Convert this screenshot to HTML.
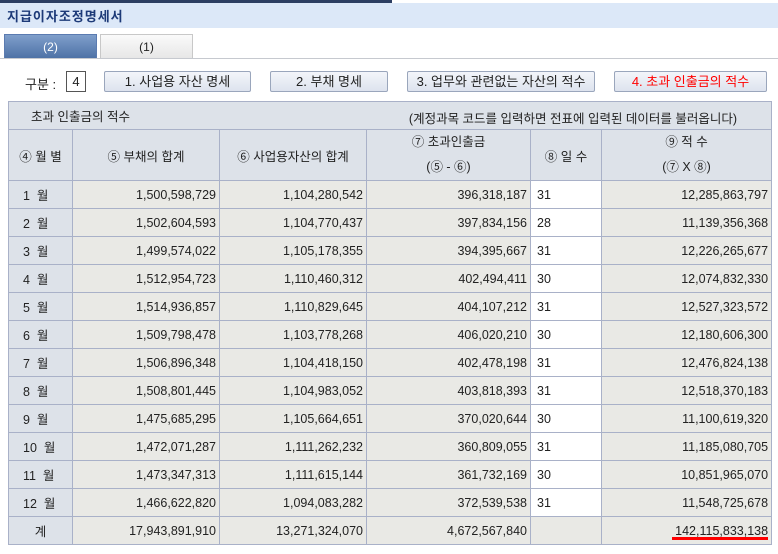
<!DOCTYPE html>
<html><head><meta charset="utf-8"><style>
*{margin:0;padding:0;box-sizing:border-box}
body{width:778px;height:554px;background:#fff;font-family:"Liberation Sans","Noto Sans CJK KR",sans-serif;font-size:12px;color:#222;position:relative;overflow:hidden}
.top{position:absolute;left:0;top:0;width:392px;height:3px;background:#2c3e62}
.title{position:absolute;left:0;top:3px;width:778px;height:25px;background:#dce8f8;color:#1d3a78;font-weight:bold;font-size:13px;padding:3px 0 0 7px;letter-spacing:1px}
.tab{position:absolute;top:34px;height:25px;text-align:center;line-height:24px;font-size:12px}
.t1{left:4px;width:93px;background:linear-gradient(#7f9fcb,#4e72a6);color:#fff;border:1px solid #5b7bb0}
.t2{left:100px;width:93px;background:linear-gradient(#fafafa,#e6e6e6);border:1px solid #c8c8c8;border-bottom:none}
.tline{position:absolute;left:0;top:58px;width:778px;height:1px;background:#c6c9cf}
.lbl{position:absolute;left:25px;top:74px;font-size:13px}
.box{position:absolute;left:66px;top:71px;width:20px;height:21px;border:1px solid #555;text-align:center;line-height:19px;font-size:13px}
.btn{position:absolute;top:71px;height:21px;border:1px solid #9aa6bc;border-radius:2px;background:linear-gradient(#f3f5fa,#dde3ee);text-align:center;line-height:19px;font-size:13px}
table{position:absolute;left:8px;top:101px;border-collapse:collapse;table-layout:fixed;width:763px}
td{border:1px solid #a9b1c8;font-size:12.5px;white-space:nowrap;overflow:hidden}
.h{background:#dde2e9;text-align:center}
.n{background:#e9e9e5;text-align:right;padding-right:3px}
.w{background:#fff;padding-left:6px}
.m{background:#dde2e9;padding-left:14px}
tr{height:28px}
</style></head><body>
<div class="top"></div>
<div class="title">지급이자조정명세서</div>
<div class="tab t1">(2)</div><div class="tab t2">(1)</div>
<div class="tline"></div>
<div class="lbl">구분 :</div><div class="box">4</div>
<div class="btn" style="left:104px;width:147px">1. 사업용 자산 명세</div>
<div class="btn" style="left:270px;width:118px">2. 부채 명세</div>
<div class="btn" style="left:407px;width:188px">3. 업무와 관련없는 자산의 적수</div>
<div class="btn" style="left:614px;width:153px;color:#f00">4. 초과 인출금의 적수</div>
<table>
<colgroup><col style="width:64px"><col style="width:147px"><col style="width:147px"><col style="width:164px"><col style="width:71px"><col style="width:170px"></colgroup>
<tr style="height:28px"><td class="h" colspan="6" style="text-align:left;padding-left:22px;position:relative">초과 인출금의 적수<span style="position:absolute;right:34px;top:6px">(계정과목 코드를 입력하면 전표에 입력된 데이터를 불러옵니다)</span></td></tr>
<tr style="height:51px"><td class="h">④ 월 별</td><td class="h">⑤ 부채의 합계</td><td class="h">⑥ 사업용자산의 합계</td><td class="h" style="line-height:25px">⑦ 초과인출금<br>(⑤ - ⑥)</td><td class="h">⑧ 일 수</td><td class="h" style="line-height:25px">⑨ 적 수<br>(⑦ X ⑧)</td></tr>
<tr><td class="m">1 &nbsp;월</td><td class="n">1,500,598,729</td><td class="n">1,104,280,542</td><td class="n">396,318,187</td><td class="w">31</td><td class="n">12,285,863,797</td></tr>
<tr><td class="m">2 &nbsp;월</td><td class="n">1,502,604,593</td><td class="n">1,104,770,437</td><td class="n">397,834,156</td><td class="w">28</td><td class="n">11,139,356,368</td></tr>
<tr><td class="m">3 &nbsp;월</td><td class="n">1,499,574,022</td><td class="n">1,105,178,355</td><td class="n">394,395,667</td><td class="w">31</td><td class="n">12,226,265,677</td></tr>
<tr><td class="m">4 &nbsp;월</td><td class="n">1,512,954,723</td><td class="n">1,110,460,312</td><td class="n">402,494,411</td><td class="w">30</td><td class="n">12,074,832,330</td></tr>
<tr><td class="m">5 &nbsp;월</td><td class="n">1,514,936,857</td><td class="n">1,110,829,645</td><td class="n">404,107,212</td><td class="w">31</td><td class="n">12,527,323,572</td></tr>
<tr><td class="m">6 &nbsp;월</td><td class="n">1,509,798,478</td><td class="n">1,103,778,268</td><td class="n">406,020,210</td><td class="w">30</td><td class="n">12,180,606,300</td></tr>
<tr><td class="m">7 &nbsp;월</td><td class="n">1,506,896,348</td><td class="n">1,104,418,150</td><td class="n">402,478,198</td><td class="w">31</td><td class="n">12,476,824,138</td></tr>
<tr><td class="m">8 &nbsp;월</td><td class="n">1,508,801,445</td><td class="n">1,104,983,052</td><td class="n">403,818,393</td><td class="w">31</td><td class="n">12,518,370,183</td></tr>
<tr><td class="m">9 &nbsp;월</td><td class="n">1,475,685,295</td><td class="n">1,105,664,651</td><td class="n">370,020,644</td><td class="w">30</td><td class="n">11,100,619,320</td></tr>
<tr><td class="m">10 &nbsp;월</td><td class="n">1,472,071,287</td><td class="n">1,111,262,232</td><td class="n">360,809,055</td><td class="w">31</td><td class="n">11,185,080,705</td></tr>
<tr><td class="m">11 &nbsp;월</td><td class="n">1,473,347,313</td><td class="n">1,111,615,144</td><td class="n">361,732,169</td><td class="w">30</td><td class="n">10,851,965,070</td></tr>
<tr><td class="m">12 &nbsp;월</td><td class="n">1,466,622,820</td><td class="n">1,094,083,282</td><td class="n">372,539,538</td><td class="w">31</td><td class="n">11,548,725,678</td></tr>
<tr><td class="h">계</td><td class="n">17,943,891,910</td><td class="n">13,271,324,070</td><td class="n">4,672,567,840</td><td class="n"></td><td class="n" style="position:relative">142,115,833,138<div style="position:absolute;right:3px;bottom:4px;width:96px;height:3px;background:#f00"></div></td></tr>
</table>
</body></html>
